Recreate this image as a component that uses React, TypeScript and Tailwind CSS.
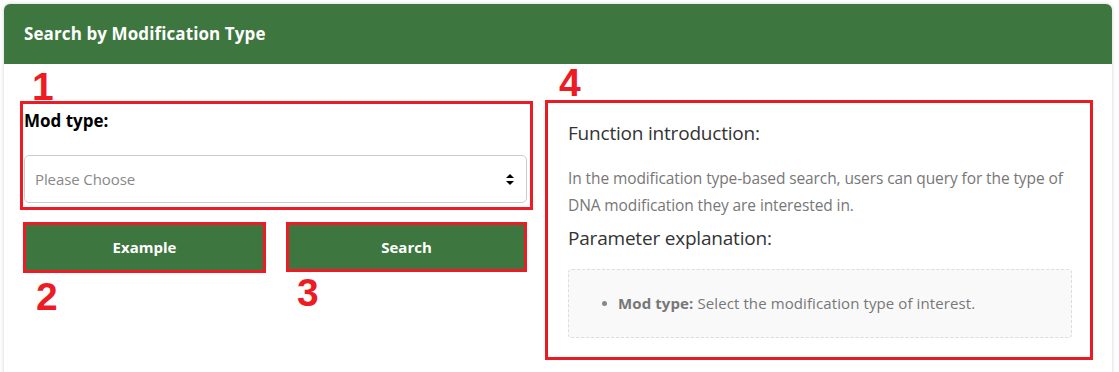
import React from "react";

const font = { fontFamily: '"Open Sans", "Noto Sans", sans-serif' };

function Mark({ n, className }: { n: string; className: string }) {
  return (
    <div
      className={`text-[39px] font-bold leading-none text-[#ed1c24] ${className}`}
      style={{ fontFamily: '"Liberation Sans", Arial, sans-serif' }}
    >
      {n}
    </div>
  );
}

function SortIcon() {
  return (
    <svg width="8" height="11" viewBox="0 0 8 11" className="text-black">
      <path d="M4 0 L8 4 H0 Z" fill="currentColor" />
      <path d="M0 7 H8 L4 11 Z" fill="currentColor" />
    </svg>
  );
}

export default function App() {
  return (
    <div className="w-[1119px] h-[372px] bg-white pt-[4px] pl-[4px] overflow-hidden" style={font}>
      <div className="w-[1108px] h-[380px] bg-white rounded-t-[6px] shadow-[0_0_4px_rgba(0,0,0,0.18)]">
        <div className="h-[60px] bg-[#3d763e] rounded-t-[6px] flex items-center px-[20px]">
          <h2 className="text-white font-bold text-[17px] tracking-[0.1px]">Search by Modification Type</h2>
        </div>

        <div className="flex pl-[16px] pt-[3px]">
          {/* left column */}
          <div className="w-[513px]">
            <Mark n="1" className="ml-[12px] h-[34px]" />
            <div className="border-[3px] border-[#ed1c24] h-[109px] pl-[1px] pr-[3px]">
              <div className="text-black font-bold text-[17px] pt-[4px] h-[51px]">Mod type:</div>
              <div className="h-[48px] border border-[#ccc] rounded-[5px] flex items-center justify-between pl-[10px] pr-[12px]">
                <span className="text-[15px] text-[#888] tracking-[-0.1px]">Please Choose</span>
                <SortIcon />
              </div>
            </div>
            <div className="flex gap-[20px] mt-[12px] pl-[3px]">
              <div className="w-[243px]">
                <div className="h-[51px] border-[3px] border-[#ed1c24]">
                  <div className="h-full bg-[#3d763e] flex items-center justify-center text-white font-bold text-[15px]">
                    Example
                  </div>
                </div>
                <Mark n="2" className="ml-[13px] mt-[4px]" />
              </div>
              <div className="w-[241px]">
                <div className="h-[50px] border-[3px] border-[#ed1c24]">
                  <div className="h-full bg-[#3d763e] flex items-center justify-center text-white font-bold text-[15px]">
                    Search
                  </div>
                </div>
                <Mark n="3" className="ml-[11px] mt-[1px]" />
              </div>
            </div>
          </div>

          {/* right column */}
          <div className="ml-[12px] w-[548px]">
            <Mark n="4" className="ml-[14px] -mt-[4px] h-[37px]" />
            <div className="border-[3px] border-[#ed1c24] h-[260px]">
              <div className="h-full bg-white rounded-[4px] shadow-[0_0_3px_rgba(0,0,0,0.12)] px-[20px] pt-[17px]">
                <h3 className="text-[19px] text-[#333] leading-[26px] tracking-[-0.2px]">Function introduction:</h3>
                <p className="mt-[19px] text-[15.5px] text-[#777] leading-[27px] tracking-[-0.1px]">
                  In the modification type-based search, users can query for the type of DNA modification they are interested in.
                </p>
                <h3 className="mt-[6px] text-[19px] text-[#333] leading-[26px] tracking-[-0.2px]">Parameter explanation:</h3>
                <div className="mt-[18px] mr-[-2px] h-[69px] bg-[#f9f9f9] border border-dashed border-[#ddd] rounded-[4px] flex items-center pl-[33px]">
                  <span className="w-[5px] h-[5px] rounded-full bg-[#888] mr-[11px]" />
                  <span className="text-[15px] text-[#777] tracking-[0.1px]">
                    <b className="font-bold">Mod type:</b> Select the modification type of interest.
                  </span>
                </div>
              </div>
            </div>
          </div>
        </div>
      </div>
    </div>
  );
}
